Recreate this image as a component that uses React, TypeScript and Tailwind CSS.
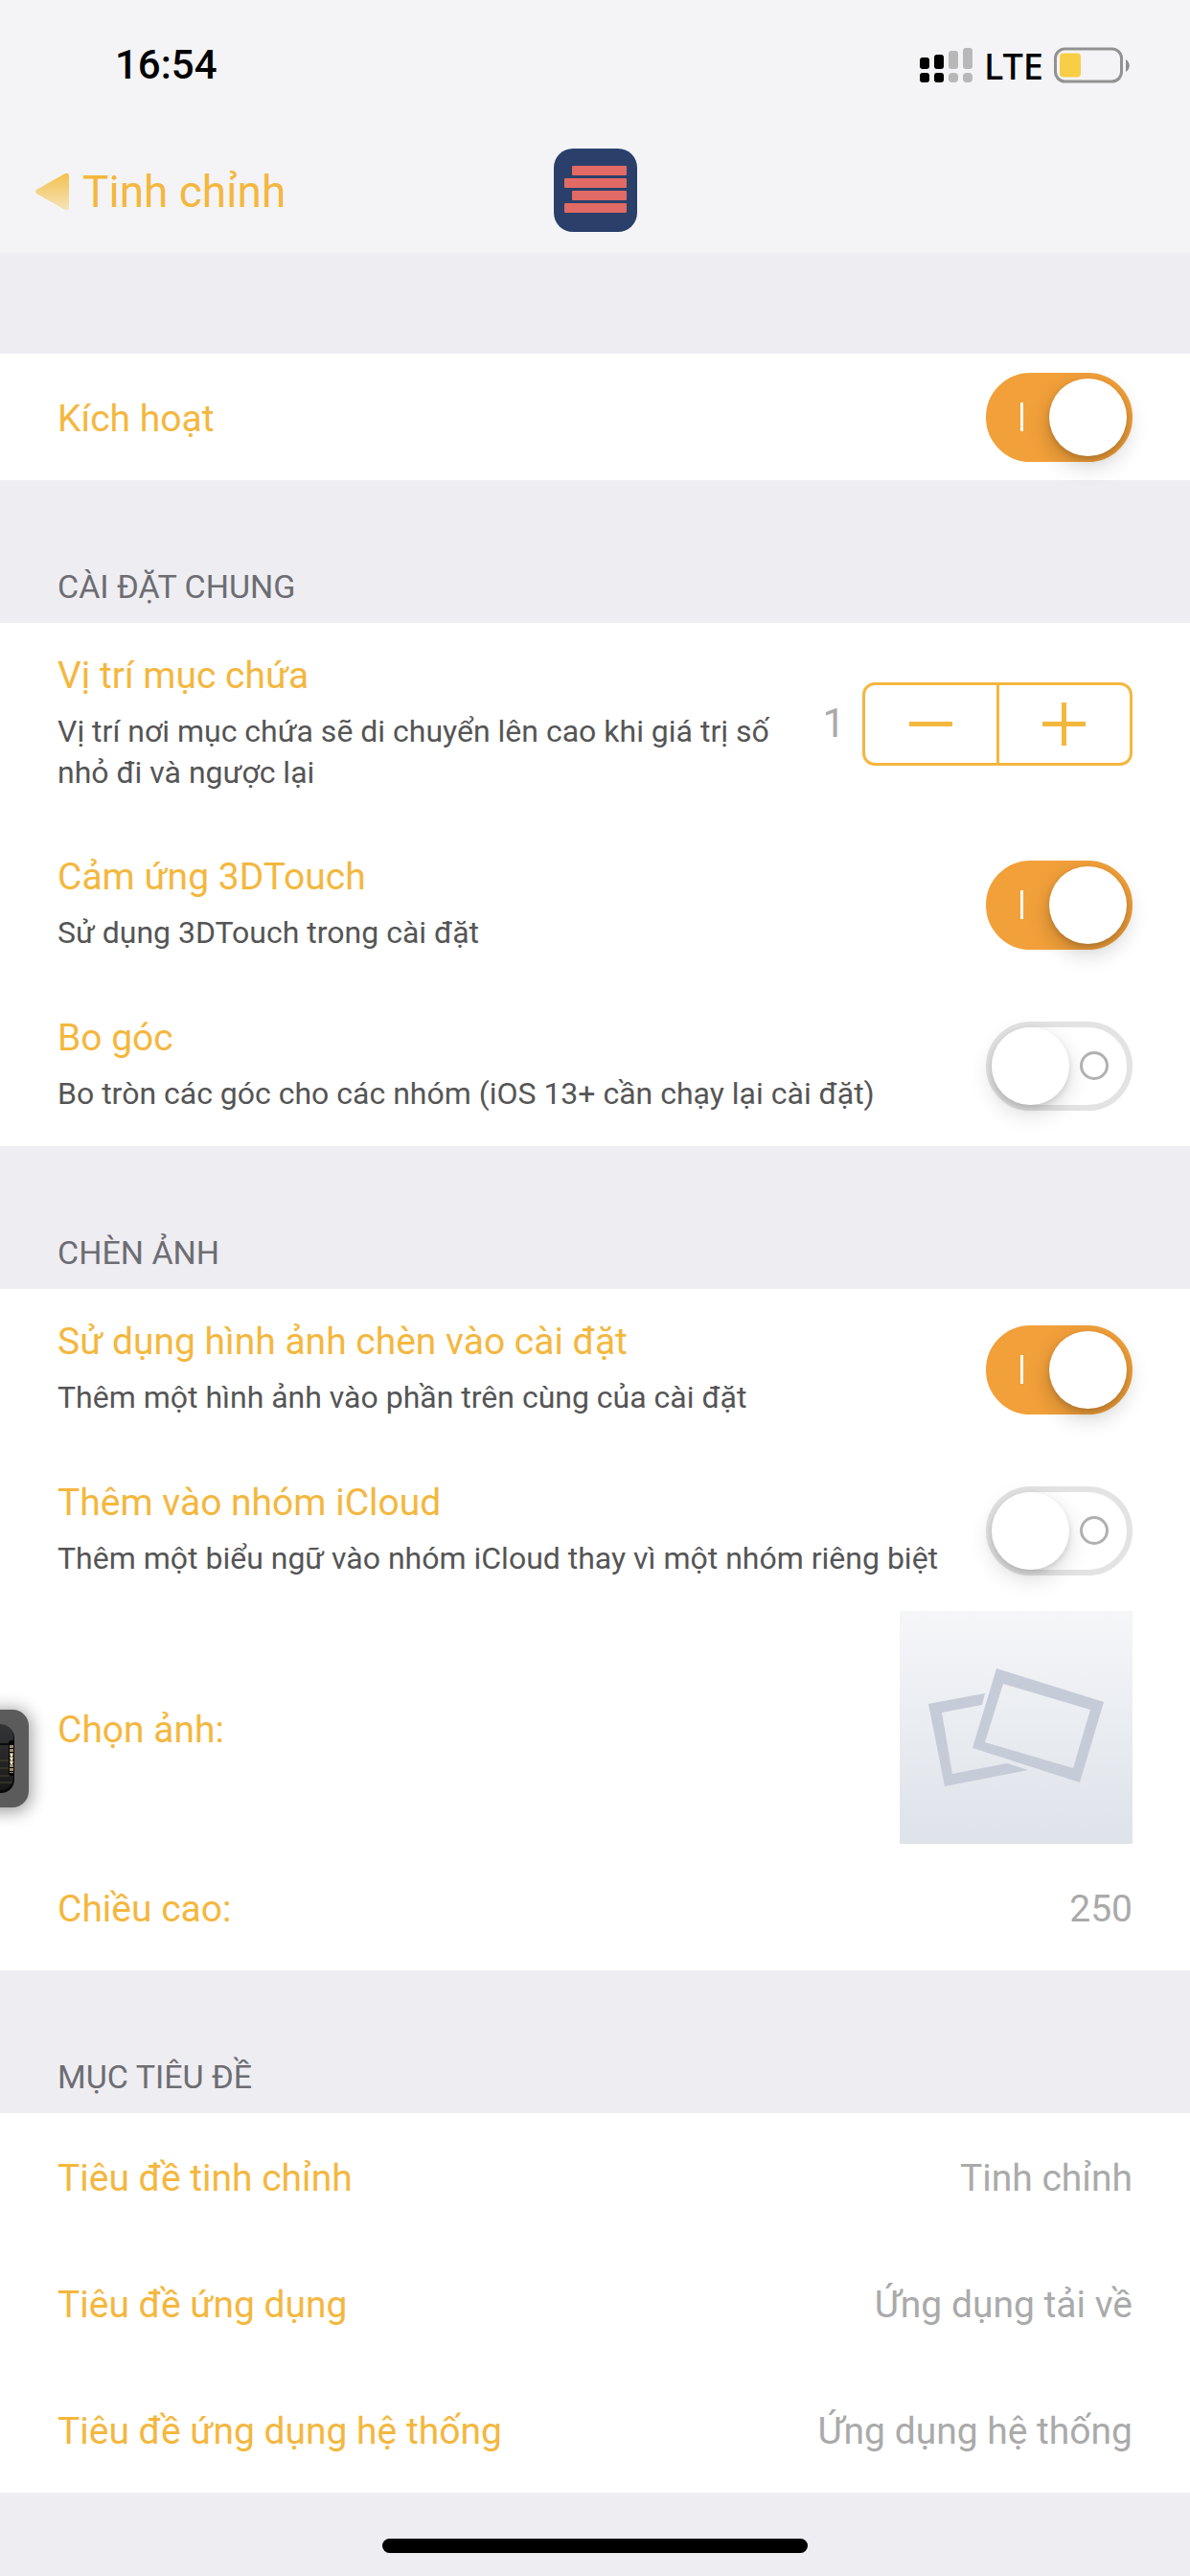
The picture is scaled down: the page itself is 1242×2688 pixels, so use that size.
import { useState, type ReactNode } from "react";

function StatusBar() {
  return (
    <div className="flex h-[132px] items-center justify-between pl-[120px] pr-[62px] pt-1 text-black">
      <time className="text-[42px] font-medium leading-[52px]">16:54</time>
      <div className="flex items-center gap-[11px]">
        <svg className="h-[36px] w-[56px]" viewBox="0 0 56 36" aria-label="Sóng di động">
          <g fill="#000">
            <rect x="0" y="10" width="10" height="12" rx="3" />
            <rect x="15" y="7" width="10" height="15" rx="3" />
            <rect x="0" y="26" width="10" height="10" rx="3" />
            <rect x="15" y="26" width="10" height="10" rx="3" />
          </g>
          <g fill="#b8b8b8">
            <rect x="30" y="3" width="10" height="19" rx="3" />
            <rect x="45" y="0" width="10" height="22" rx="3" />
            <rect x="30" y="26" width="10" height="10" rx="4" />
            <rect x="45" y="26" width="10" height="10" rx="4" />
          </g>
        </svg>
        <span className="font-['Noto_Sans'] text-[38px] font-medium leading-[48px]">LTE</span>
        <svg className="h-[38px] w-[80px]" viewBox="0 0 80 38" aria-label="Pin">
          <rect x="1.5" y="2" width="69" height="34" rx="10" fill="none" stroke="#929292" strokeWidth="3" />
          <rect x="6" y="6.500" width="22" height="25" rx="4" fill="#f8ce46" />
          <path d="M75 13c5 3 5 10 0 13z" fill="#8e8e90" />
        </svg>
      </div>
    </div>
  );
}

function NavBar() {
  return (
    <nav className="grid h-[132px] grid-cols-[1fr_auto_1fr] items-center px-9">
      <a href="#tinh-chinh" className="flex items-center gap-[14px] pt-1 text-[#f4b73e]">
        <svg className="h-[40px] w-[36px]" viewBox="0 0 36 40" aria-hidden="true">
          <defs>
            <linearGradient id="back" x1="0" y1="0" x2="0" y2="1">
              <stop offset="0" stopColor="#f3c14e" />
              <stop offset="1" stopColor="#f6e3b8" />
            </linearGradient>
          </defs>
          <path d="M2 18 32 1Q36 0 36 4V36Q36 40 32 39L2 22Q0 20 2 18Z" fill="url(#back)" />
        </svg>
        <span className="text-[46px] leading-[56px]">Tinh chỉnh</span>
      </a>
      <svg className="h-[87px] w-[87px]" viewBox="0 0 87 87" aria-hidden="true">
        <rect width="87" height="87" rx="20" fill="#2a406b" />
        <g fill="#e16a64">
          <rect x="19" y="18" width="57" height="10" rx="1" />
          <rect x="11" y="31" width="65" height="10" rx="1" />
          <rect x="19" y="44" width="57" height="10" rx="1" />
          <rect x="11" y="57" width="65" height="10" rx="1" />
        </g>
      </svg>
    </nav>
  );
}

function Toggle({ label, initial }: { label: string; initial: boolean }) {
  const [on, setOn] = useState(initial);
  return (
    <label className="relative block h-[93px] w-[153px] shrink-0 cursor-pointer">
      <input
        type="checkbox"
        role="switch"
        aria-label={label}
        checked={on}
        onChange={(e) => setOn(e.target.checked)}
        className="peer sr-only"
      />
      <span className="flex h-full items-center justify-between rounded-full border-[6px] border-[#e3e3e3] bg-white peer-checked:border-[#f2a03a] peer-checked:bg-[#f2a03a]">
        {on ? (
          <>
            <span className="ml-[30px] h-[30px] w-[3px] bg-white" />
            <span className="size-[81px] rounded-full bg-white shadow-[0_9px_24px_rgba(0,0,0,0.2),0_3px_6px_rgba(0,0,0,0.15)]" />
          </>
        ) : (
          <>
            <span className="size-[81px] rounded-full bg-white shadow-[0_9px_24px_rgba(0,0,0,0.15),0_3px_6px_rgba(0,0,0,0.12)]" />
            <span className="mr-[19px] size-[30px] rounded-full border-[3px] border-[#b0b0b0]" />
          </>
        )}
      </span>
    </label>
  );
}

function Stepper() {
  const [value, setValue] = useState(1);
  return (
    <div className="flex shrink-0 items-center gap-[18px]">
      <output className="text-[42px] leading-[50px] text-[#aaaaaa]">{value}</output>
      <div className="flex h-[87px] w-[282px] divide-x-[3px] divide-[#f4b73e] rounded-[13px] border-[3px] border-[#f4b73e] text-[#f4b73e]">
        <button type="button" aria-label="Giảm" onClick={() => setValue(value - 1)} className="flex flex-1 items-center justify-center">
          <svg className="size-[45px]" viewBox="0 0 45 45"><path d="M0 22.500H45" stroke="currentColor" strokeWidth="5" /></svg>
        </button>
        <button type="button" aria-label="Tăng" onClick={() => setValue(value + 1)} className="flex flex-1 items-center justify-center">
          <svg className="size-[45px]" viewBox="0 0 45 45"><path d="M0 22.500H45M22.500 0V45" stroke="currentColor" strokeWidth="5" /></svg>
        </button>
      </div>
    </div>
  );
}

function Section({ title, children }: { title?: string; children?: ReactNode }) {
  return (
    <section className="shrink-0">
      {title && (
        <h2 className="flex h-[149px] items-end px-[60px] pb-4 text-[34px] leading-[44px] text-[#6d6d72]">{title}</h2>
      )}
      <div className="bg-white">{children}</div>
    </section>
  );
}

function DetailRow({ title, detail, children }: { title: string; detail: string; children: ReactNode }) {
  return (
    <div className="flex min-h-[168px] items-center justify-between gap-5 px-[60px]">
      <div className="min-w-0 self-start pb-8 pt-[30px]">
        <h3 className="text-[39px] leading-[50px] text-[#f4b73e]">{title}</h3>
        <p className="mt-3 text-[32px] leading-[43px] text-[#555555]">{detail}</p>
      </div>
      {children}
    </div>
  );
}

function PlainRow({ title, children }: { title: string; children: ReactNode }) {
  return (
    <div className="flex min-h-[132px] items-center justify-between gap-5 px-[60px]">
      <h3 className="pt-1 text-[39px] leading-[50px] text-[#f4b73e]">{title}</h3>
      {children}
    </div>
  );
}

function ValueRow({ id, title, value }: { id: string; title: string; value: string }) {
  return (
    <div className="flex h-[132px] items-center gap-5 px-[60px] pt-1">
      <label htmlFor={id} className="shrink-0 text-[39px] leading-[50px] text-[#f4b73e]">{title}</label>
      <input
        id={id}
        defaultValue={value}
        className="min-w-0 flex-1 bg-transparent text-right text-[39px] leading-[50px] text-[#aaaaaa] outline-none"
      />
    </div>
  );
}

function PhotoPicker() {
  return (
    <button type="button" aria-label="Chọn ảnh" className="size-[243px] bg-linear-to-b from-[#f5f6f8] via-[#e9ecf1] to-[#dee3e9]">
      <svg className="size-full" viewBox="0 0 243 243" fill="#c6cbd8">
        <path d="M30 97 89 86 86 98 44 106 55 170 112 159 134 166 47 183Z" />
        <path fillRule="evenodd" d="M101 60 213 95 188 179 76 143ZM108 76 89 137 181 164 199 103Z" />
      </svg>
    </button>
  );
}

function AssistiveDock() {
  return (
    <svg className="absolute left-0 top-[1764px] h-[142px] w-[60px]" viewBox="0 0 60 142" aria-hidden="true">
      <defs>
        <filter id="dockShadow" x="-50%" y="-50%" width="200%" height="200%">
          <feGaussianBlur stdDeviation="9" />
        </filter>
        <linearGradient id="chip" x1="0" y1="0" x2="0" y2="1">
          <stop offset="0" stopColor="#343536" />
          <stop offset="1" stopColor="#181818" />
        </linearGradient>
      </defs>
      <rect x="-30" y="20" width="62" height="106" rx="17" fill="#000" opacity="0.4" filter="url(#dockShadow)" />
      <rect x="-30" y="20" width="60" height="102" rx="17" fill="#5b5b5b" />
      <rect x="-30" y="36" width="45" height="71" rx="14" fill="#0b0b0b" />
      <rect x="-30" y="35" width="44" height="69" rx="14" fill="url(#chip)" />
      <path d="M0 56H10M0 73H9M0 81H9M0 89H9M0 96H13" stroke="#4b4730" />
      <path d="M0 56H10" stroke="#0c0c0c" strokeWidth="2" />
      <path d="M15 52H12Q9 52 9 56V85Q9 89 12 89H15Z" fill="#060606" />
      <path d="M12 57V86" stroke="#a08d6a" strokeWidth="4" strokeDasharray="3 1" />
      <path d="M12 66V78" stroke="#f0dfc0" strokeWidth="2" strokeDasharray="3 1" />
    </svg>
  );
}

export default function App() {
  return (
    <div className="relative flex h-screen flex-col overflow-hidden bg-[#eeedf2] font-[Roboto,sans-serif]">
      <header className="shrink-0 bg-[#f4f4f6]">
        <StatusBar />
        <NavBar />
      </header>

      <main className="flex flex-col pt-[105px]">
        <Section>
          <PlainRow title="Kích hoạt">
            <Toggle label="Kích hoạt" initial={true} />
          </PlainRow>
        </Section>

        <Section title="CÀI ĐẶT CHUNG">
          <DetailRow title="Vị trí mục chứa" detail="Vị trí nơi mục chứa sẽ di chuyển lên cao khi giá trị số nhỏ đi và ngược lại">
            <Stepper />
          </DetailRow>
          <DetailRow title="Cảm ứng 3DTouch" detail="Sử dụng 3DTouch trong cài đặt">
            <Toggle label="Cảm ứng 3DTouch" initial={true} />
          </DetailRow>
          <DetailRow title="Bo góc" detail="Bo tròn các góc cho các nhóm (iOS 13+ cần chạy lại cài đặt)">
            <Toggle label="Bo góc" initial={false} />
          </DetailRow>
        </Section>

        <Section title="CHÈN ẢNH">
          <DetailRow title="Sử dụng hình ảnh chèn vào cài đặt" detail="Thêm một hình ảnh vào phần trên cùng của cài đặt">
            <Toggle label="Sử dụng hình ảnh chèn vào cài đặt" initial={true} />
          </DetailRow>
          <DetailRow title="Thêm vào nhóm iCloud" detail="Thêm một biểu ngữ vào nhóm iCloud thay vì một nhóm riêng biệt">
            <Toggle label="Thêm vào nhóm iCloud" initial={false} />
          </DetailRow>
          <PlainRow title="Chọn ảnh:">
            <PhotoPicker />
          </PlainRow>
          <ValueRow id="height" title="Chiều cao:" value="250" />
        </Section>

        <Section title="MỤC TIÊU ĐỀ">
          <ValueRow id="tweaks" title="Tiêu đề tinh chỉnh" value="Tinh chỉnh" />
          <ValueRow id="apps" title="Tiêu đề ứng dụng" value="Ứng dụng tải về" />
          <ValueRow id="system" title="Tiêu đề ứng dụng hệ thống" value="Ứng dụng hệ thống" />
        </Section>
      </main>

      <AssistiveDock />
      <div className="absolute bottom-6 left-1/2 h-[15px] w-[444px] -translate-x-1/2 rounded-full bg-black" />
    </div>
  );
}
